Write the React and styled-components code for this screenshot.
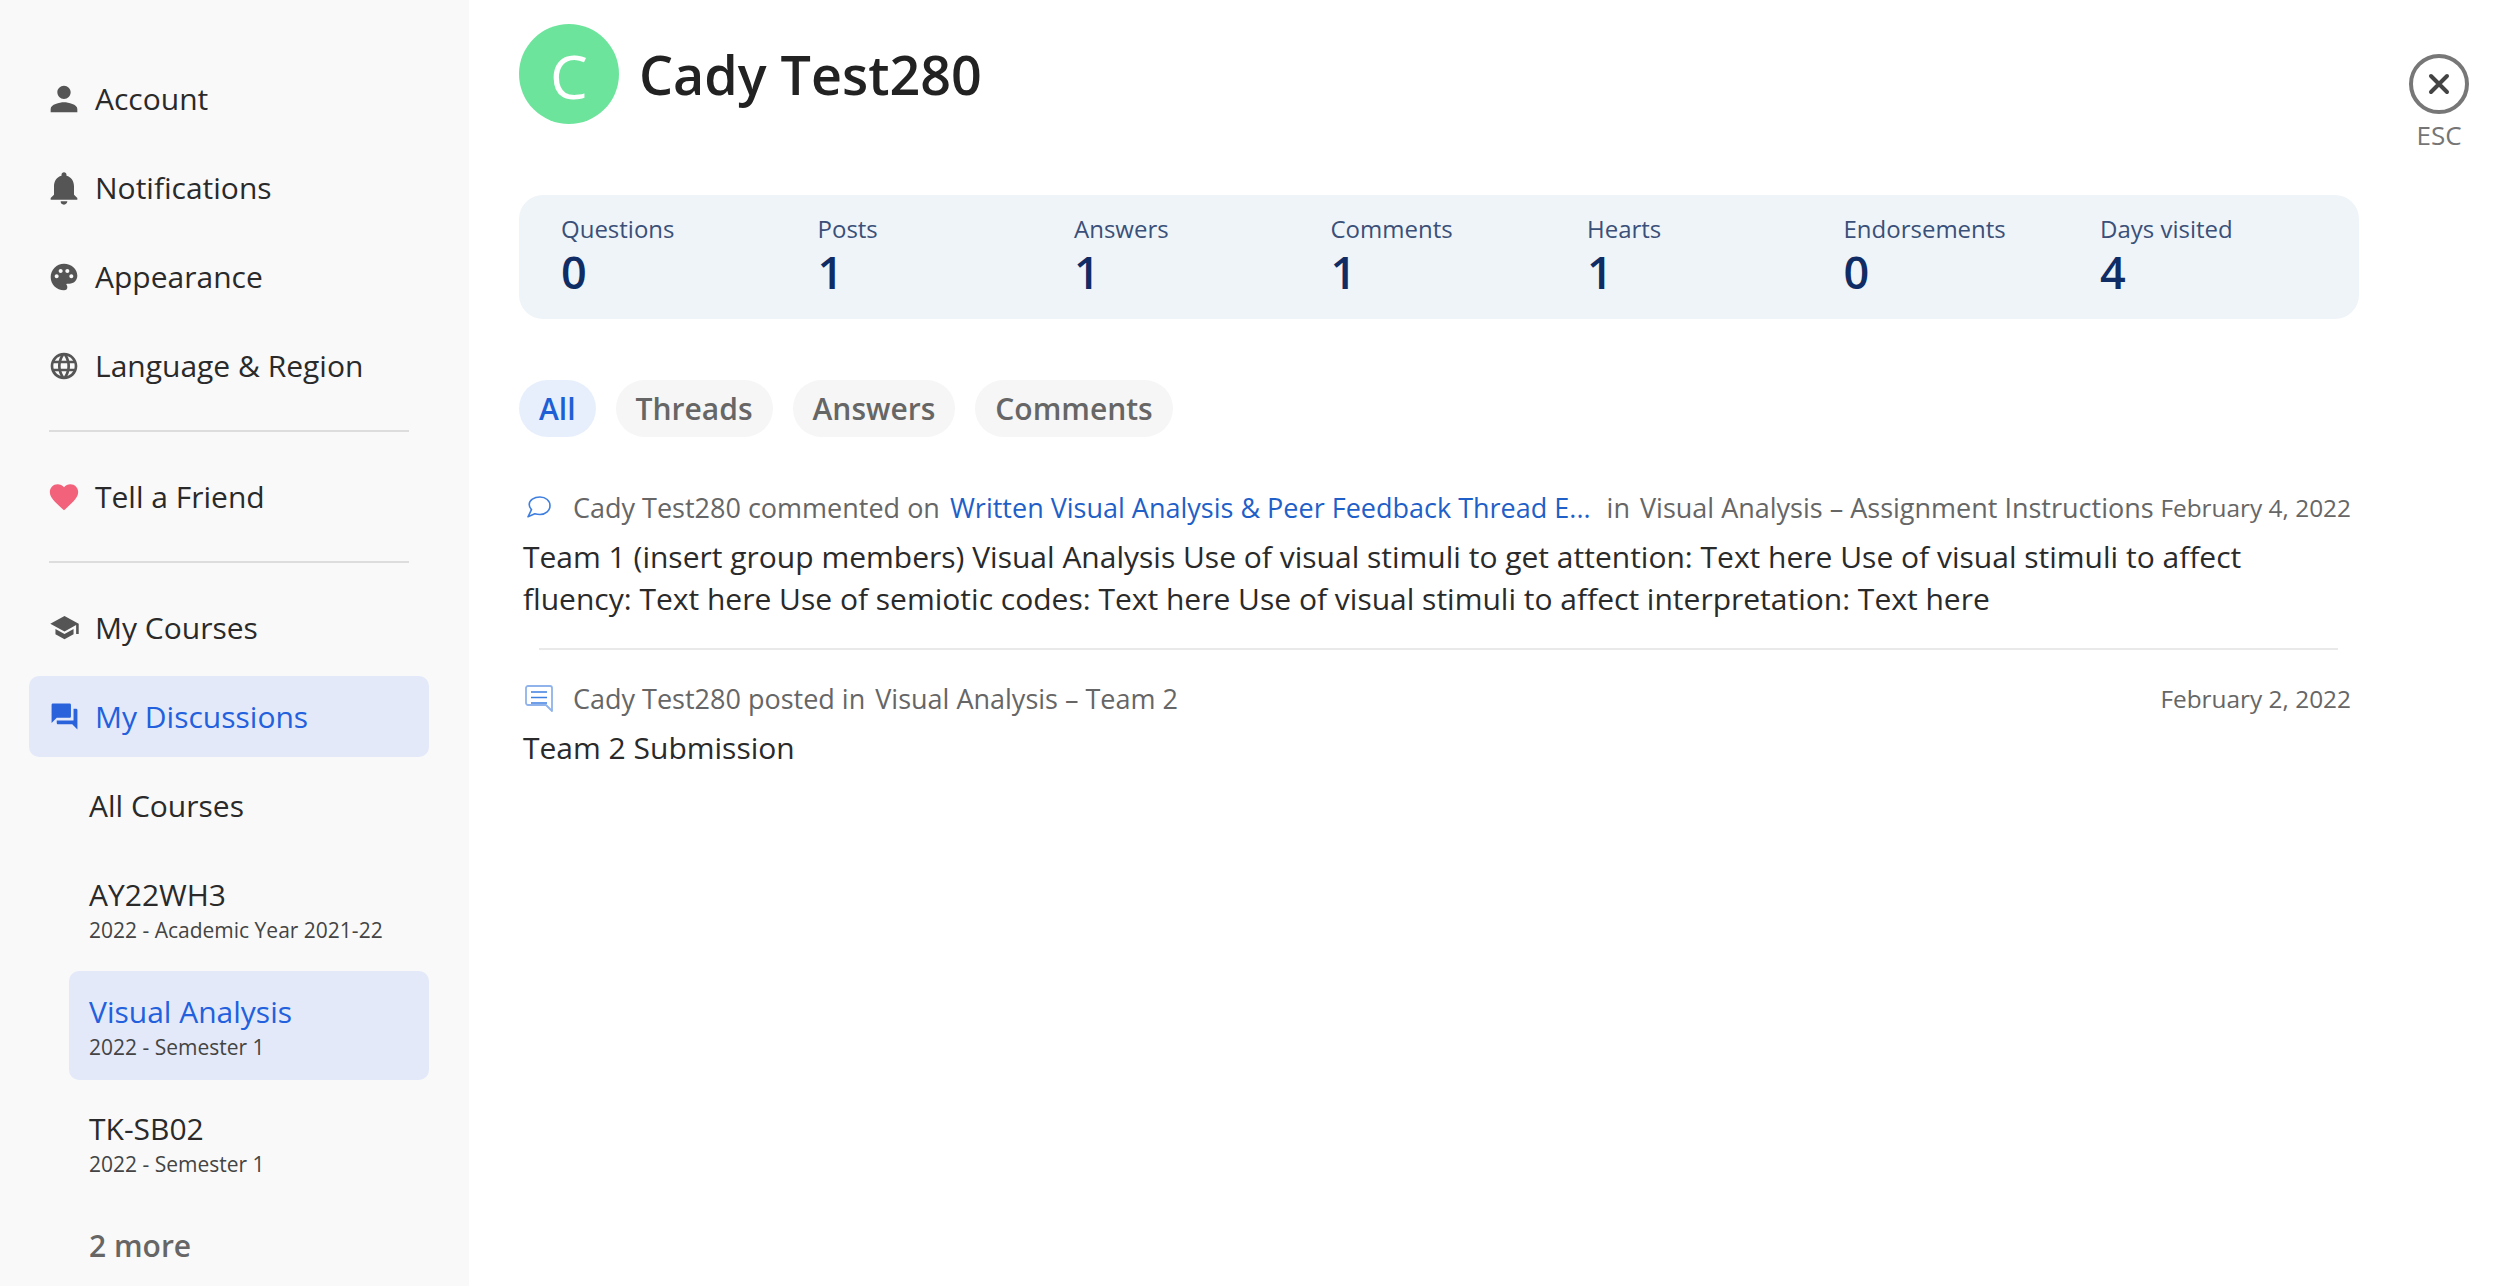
import React from "react";
import styled, { createGlobalStyle } from "styled-components";
import { MdPerson, MdNotifications, MdPalette, MdLanguage, MdFavorite, MdSchool, MdForum } from "react-icons/md";

const Global = createGlobalStyle`
  html, body { margin: 0; padding: 0; background: #fff; }
  body { font-family: "Open Sans", "Noto Sans", sans-serif; color: #222; }
  * { box-sizing: border-box; }
`;
const Page = styled.div`display: flex; width: 2518px; height: 1286px; overflow: hidden;`;
const Sidebar = styled.nav`
  width: 469px; flex: none; background: #f9f9f9; padding: 54px 40px 0 29px;
  display: flex; flex-direction: column;
`;
const NavItem = styled.div`
  height: ${p => p.$active ? 81 : 89}px; margin: ${p => p.$active ? "4px 0" : "0"};
  flex: none; display: flex; align-items: center; gap: 11px; padding-left: 15px;
  font-size: 30px; border-radius: 10px;
  color: ${p => p.$active ? "#2260dd" : "#2a2a2a"};
  background: ${p => p.$active ? "#e3e9f9" : "transparent"};
`;
const IconBox = styled.span`
  width: 40px; height: 40px; flex: none; display: flex; align-items: center; justify-content: center;
  color: ${p => p.$active ? "#2a62dc" : p.$heart ? "#f2627a" : "#555"};
`;
const Rule = styled.hr`
  border: 0; height: 2px; background: #ddd; width: 360px; flex: none;
  margin: 20px 0 20px 20px;
`;
const Course = styled.div`
  margin: ${p => p.$m || "0 0 0 40px"}; height: ${p => p.$h || 109}px; padding: ${p => p.$pad || 0}px 0 0 20px; border-radius: 10px;
  flex: none; display: flex; flex-direction: column; justify-content: center;
  background: ${p => p.$active ? "#e3e9f9" : "transparent"};
  color: ${p => p.$muted ? "#666" : p.$active ? "#2260dd" : "#2a2a2a"};
  font-size: 30px; font-weight: ${p => p.$muted ? 600 : 400}; line-height: 40px;
`;
const CourseSub = styled.div`font-size: 21px; line-height: 30px; color: #444; font-weight: 400;`;
const Main = styled.main`flex: 1; padding: 24px 0 0 50px; min-width: 0;`;
const Header = styled.header`display: flex; align-items: center; gap: 20px; height: 100px;`;
const Avatar = styled.div`
  width: 100px; height: 100px; border-radius: 50%; background: #6de49c; color: #fff; padding-top: 3px;
  display: flex; align-items: center; justify-content: center; font-size: 60px; font-weight: 400;
`;
const Title = styled.h1`margin: 0 0 1px; font-size: 53.8px; font-weight: 600; color: #222; line-height: 70px;`;
const Stats = styled.section`
  margin-top: 71px; height: 124px; width: 1840px; background: #eff4f9; border-radius: 24px;
  padding: 0 0 7px 42px; display: grid; grid-template-columns: repeat(7, 256.5px); align-content: center;
`;
const Stat = styled.div`display: flex; flex-direction: column;`;
const StatLabel = styled.div`font-size: 24px; line-height: 36px; color: #3a5078;`;
const StatValue = styled.div`font-size: 45px; line-height: 50px; font-weight: 600; color: #0f2d64;`;
const Chips = styled.div`display: flex; gap: 20px; margin-top: 61px;`;
const Chip = styled.div`
  height: 57px; padding: 0 20px; border-radius: 29px; display: flex; align-items: center;
  font-size: 30px; font-weight: 600;
  background: ${p => p.$active ? "#e8effc" : "#f6f6f6"};
  color: ${p => p.$active ? "#1f5fd6" : "#666"};
`;
const Feed = styled.div`width: 1840px; margin-top: 45px;`;
const Item = styled.article`padding: 0 8px 0 4px;`;
const Meta = styled.div`
  display: flex; align-items: center; height: 50px; font-size: 27px; color: #666; white-space: nowrap;
`;
const MetaIcon = styled.span`width: 50px; flex: none; display: flex; align-items: center; padding-left: ${p => p.$indent}px;`;
const Link = styled.span`color: #1f5fc8; margin: 0 16px 0 10px;`;
const Plain = styled.span`margin-left: 10px;`;
const DateText = styled.span`margin-left: auto; font-size: 24.4px; color: #666;`;
const Body = styled.p`margin: 4px 0 0; font-size: 30px; line-height: 41.6px; color: #2a2a2a; width: 1800px;`;
const Divider = styled.hr`border: 0; height: 2px; background: #e9e9e9; margin: 29px 21px 23px 20px;`;
const Close = styled.aside`width: 110px; flex: none; margin-right: 24px; padding-top: 54px; display: flex; flex-direction: column; align-items: center;`;
const CloseCircle = styled.div`
  width: 60px; height: 60px; border-radius: 50%; border: 4px solid #777; color: #444;
  display: flex; align-items: center; justify-content: center;
`;
const EscLabel = styled.div`font-size: 26px; line-height: 36px; color: #757575; margin-top: 3px;`;

const icons = [
  [MdPerson, "Account", 40], [MdNotifications, "Notifications", 40], [MdPalette, "Appearance", 32], [MdLanguage, "Language & Region", 32],
];
const stats = [["Questions", 0], ["Posts", 1], ["Answers", 1], ["Comments", 1], ["Hearts", 1], ["Endorsements", 0], ["Days visited", 4]];

export default function App() {
  return (
    <Page>
      <Global />
      <Sidebar>
        {icons.map(([I, t, s]) => <NavItem key={t}><IconBox><I size={s} /></IconBox>{t}</NavItem>)}
        <Rule />
        <NavItem><IconBox $heart><MdFavorite size={34} /></IconBox>Tell a Friend</NavItem>
        <Rule />
        <NavItem><IconBox><MdSchool size={31} /></IconBox>My Courses</NavItem>
        <NavItem $active><IconBox $active><MdForum size={31} /></IconBox>My Discussions</NavItem>
        <Course $h={89}>All Courses</Course>
        <Course $m="4px 0 8px 40px" $pad={2}>AY22WH3<CourseSub>2022 - Academic Year 2021-22</CourseSub></Course>
        <Course $active $pad={2}>Visual Analysis<CourseSub>2022 - Semester 1</CourseSub></Course>
        <Course $m="8px 0 4px 40px" $pad={2}>TK-SB02<CourseSub>2022 - Semester 1</CourseSub></Course>
        <Course $h={89} $muted>2 more</Course>
      </Sidebar>
      <Main>
        <Header><Avatar>C</Avatar><Title>Cady Test280</Title></Header>
        <Stats>
          {stats.map(([l, v]) => <Stat key={l}><StatLabel>{l}</StatLabel><StatValue>{v}</StatValue></Stat>)}
        </Stats>
        <Chips>
          <Chip $active>All</Chip><Chip>Threads</Chip><Chip>Answers</Chip><Chip>Comments</Chip>
        </Chips>
        <Feed>
          <Item>
            <Meta>
              <MetaIcon $indent={4}>
                <svg width="24" height="22" viewBox="0 0 24 22" fill="none" stroke="#3f7fe0" strokeWidth="1.6" strokeLinejoin="round">
                  <path d="M13 1C7 1 2.200 4.200 2.200 8.600c0 2 1 3.700 2.300 5L1 20.800l6.800-3c1.600.5 3.300.7 5.200.7 5.800 0 10-3.900 10-8.800S18.800 1 13 1z" />
                </svg>
              </MetaIcon>
              Cady Test280 commented on
              <Link>Written Visual Analysis &amp; Peer Feedback Thread E...</Link>
              in<Plain>Visual Analysis – Assignment Instructions</Plain>
              <DateText>February 4, 2022</DateText>
            </Meta>
            <Body>Team 1 (insert group members) Visual Analysis Use of visual stimuli to get attention: Text here Use of visual stimuli to affect fluency: Text here Use of semiotic codes: Text here Use of visual stimuli to affect interpretation: Text here</Body>
          </Item>
          <Divider />
          <Item>
            <Meta>
              <MetaIcon $indent={2}>
                <svg width="28" height="27" viewBox="0 0 28 27" fill="none">
                  <path d="M3 1h22a2 2 0 0 1 2 2v23l-6-6H3a2 2 0 0 1-2-2V3a2 2 0 0 1 2-2z" stroke="#8fb3ea" strokeWidth="1.8" strokeLinejoin="round" />
                  <path d="M6 7h16M6 12.500h16M6 18h16" stroke="#3f7fe0" strokeWidth="1.5" />
                </svg>
              </MetaIcon>
              Cady Test280 posted in<Plain>Visual Analysis – Team 2</Plain>
              <DateText>February 2, 2022</DateText>
            </Meta>
            <Body>Team 2 Submission</Body>
          </Item>
        </Feed>
      </Main>
      <Close>
        <CloseCircle>
          <svg width="24" height="24" viewBox="0 0 24 24" stroke="#444" strokeWidth="4" strokeLinecap="round"><path d="M4 4l16 16M20 4L4 20" /></svg>
        </CloseCircle>
        <EscLabel>ESC</EscLabel>
      </Close>
    </Page>
  );
}
